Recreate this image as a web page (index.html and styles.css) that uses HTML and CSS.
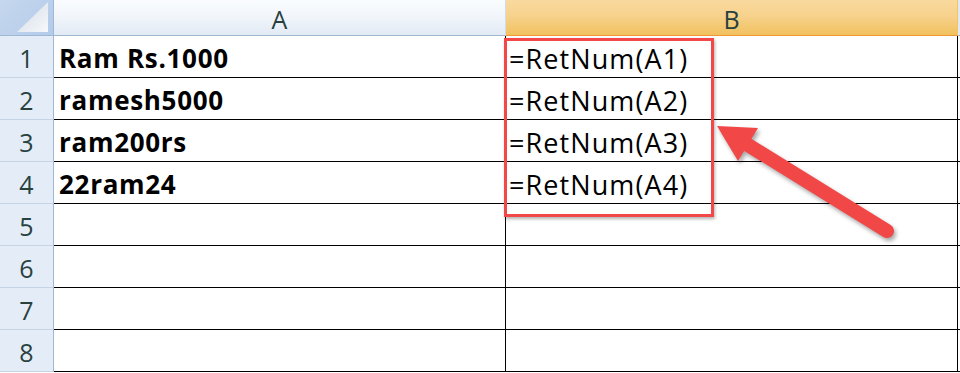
FILE: index.html
```html
<!DOCTYPE html>
<html>
<head>
<meta charset="utf-8">
<link rel="stylesheet" href="styles.css">
</head>
<body>
<div class="sheet">
  <div class="grid">
    <div class="corner"><svg class="tri" width="54" height="36" viewBox="0 0 54 36"><defs><linearGradient id="tg" x1="0" y1="0" x2="1" y2="1"><stop offset="0" stop-color="#d3dbe6"/><stop offset="1" stop-color="#f6f8fb"/></linearGradient></defs><polygon points="17,32 48,32 48,2" fill="url(#tg)"/></svg></div>
    <div class="colhead">A</div>
    <div class="colhead sel">B</div>
    <div class="colhead extra"></div>

    <div class="rowhead">1</div><div class="cell a">Ram Rs.1000</div><div class="cell b">=RetNum(A1)</div><div class="cell x"></div>
    <div class="rowhead">2</div><div class="cell a">ramesh5000</div><div class="cell b">=RetNum(A2)</div><div class="cell x"></div>
    <div class="rowhead">3</div><div class="cell a">ram200rs</div><div class="cell b">=RetNum(A3)</div><div class="cell x"></div>
    <div class="rowhead">4</div><div class="cell a">22ram24</div><div class="cell b">=RetNum(A4)</div><div class="cell x"></div>
    <div class="rowhead">5</div><div class="cell a"></div><div class="cell b"></div><div class="cell x"></div>
    <div class="rowhead">6</div><div class="cell a"></div><div class="cell b"></div><div class="cell x"></div>
    <div class="rowhead">7</div><div class="cell a"></div><div class="cell b"></div><div class="cell x"></div>
    <div class="rowhead">8</div><div class="cell a"></div><div class="cell b"></div><div class="cell x"></div>
  </div>
  <div class="highlight"></div>
  <svg class="arrow" width="960" height="373" viewBox="0 0 960 373">
    <line x1="748" y1="145" x2="887" y2="231" stroke="#f24747" stroke-width="14" stroke-linecap="round"/>
    <polygon points="717,126 758,128 738,161" fill="#f24747"/>
  </svg>
</div>
</body>
</html>
```
FILE: styles.css
```css
html, body {
  margin: 0;
  padding: 0;
  background: #ffffff;
  overflow: hidden;
}
.sheet {
  position: relative;
  width: 960px;
  height: 373px;
  overflow: hidden;
}
.grid {
  display: grid;
  grid-template-columns: 54px 452px 452px 2px;
  grid-template-rows: 36px repeat(8, 42px);
}
.grid > div {
  box-sizing: border-box;
}
.corner {
  background: linear-gradient(135deg, #c6d7ee 0%, #b3cbea 100%);
  border-right: 1px solid #9fb8d6;
  border-bottom: 1px solid #9fb8d6;
  position: relative;
}
.tri {
  display: block;
}
.colhead {
  display: flex;
  align-items: center;
  justify-content: center;
  padding-top: 3px;
  font-family: "Open Sans", "Liberation Sans", sans-serif;
  font-size: 25px;
  color: #27413e;
  background: linear-gradient(180deg, #fafcfe 0%, #f2f6fb 45%, #e2eaf5 100%);
  border-right: 1px solid #d0dcea;
  border-bottom: 1px solid #9eb6ce;
}
.colhead.sel {
  background: linear-gradient(180deg, #f9d99f 0%, #f7d28d 45%, #f1c15e 100%);
  border-right: 1px solid #f3c36a;
  border-bottom: 1px solid #f29536;
}
.colhead.extra {
  background: #dfe8f4;
  border-right: 0;
}
.rowhead {
  display: flex;
  align-items: center;
  justify-content: center;
  padding-top: 3px;
  font-family: "Open Sans", "Liberation Sans", sans-serif;
  font-size: 25px;
  color: #27413e;
  background: #e4ecf7;
  border-right: 1px solid #9fb8d6;
  border-bottom: 1px solid #c5d3e3;
}
.cell {
  display: flex;
  align-items: center;
  padding-top: 3px;
  font-family: "Open Sans", "Liberation Sans", sans-serif;
  color: #000;
  white-space: nowrap;
  border-bottom: 1px solid #000;
  border-right: 1px solid #000;
}
.cell.a {
  font-size: 26px;
  font-weight: 700;
  padding-left: 5px;
  letter-spacing: 0.7px;
}
.cell.b {
  font-size: 27px;
  padding-left: 3px;
  letter-spacing: 1.1px;
}
.cell.x {
  border-right: 0;
}
.highlight {
  position: absolute;
  left: 504px;
  top: 38px;
  width: 210px;
  height: 179px;
  box-sizing: border-box;
  border: 3px solid #f34848;
  box-shadow: 1px 2px 3px rgba(0, 0, 0, 0.3);
}
.arrow {
  position: absolute;
  left: 0;
  top: 0;
  filter: drop-shadow(2px 3px 2px rgba(0, 0, 0, 0.35));
}
```
